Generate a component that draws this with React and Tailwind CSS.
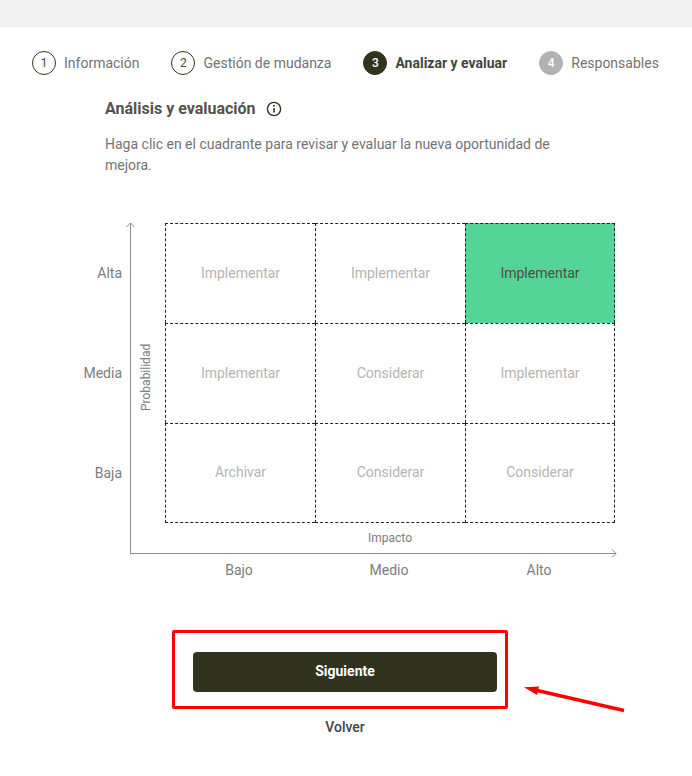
const font = { fontFamily: "Roboto, sans-serif" };

function Step({ n, label, state }) {
  const circle =
    state === "active"
      ? "bg-[#32331f] text-white font-medium border-[#32331f]"
      : state === "todo"
      ? "bg-[#b2b2b2] text-white font-medium border-[#b2b2b2]"
      : "bg-white text-[#4a4a45] border-[#32331f]";
  return (
    <div className="flex items-center gap-2">
      <div className={`w-6 h-6 rounded-full border flex items-center justify-center text-xs ${circle}`}>{n}</div>
      <span className={`text-sm ${state === "active" ? "font-bold text-[#44443f]" : "text-[#737373]"}`}>{label}</span>
    </div>
  );
}

const cells = [
  ["Implementar", "Implementar", "Implementar"],
  ["Implementar", "Considerar", "Implementar"],
  ["Archivar", "Considerar", "Considerar"],
];

export default function App() {
  return (
    <div style={font} className="relative w-[692px] h-[776px] bg-white overflow-hidden">
      <div className="h-[27px] bg-[#f2f2f2]" />

      <div className="flex items-center pl-[32px] gap-[32px] mt-6 h-6">
        <Step n="1" label="Información" state="done" />
        <Step n="2" label="Gestión de mudanza" state="done" />
        <Step n="3" label="Analizar y evaluar" state="active" />
        <Step n="4" label="Responsables" state="todo" />
      </div>

      <div className="pl-[105px] pr-[130px] mt-[24px]">
        <div className="flex items-center gap-[10px] h-5">
          <h2 className="text-base font-bold text-[#55524e]">Análisis y evaluación</h2>
          <svg width="16" height="16" viewBox="0 0 16 16" fill="none" stroke="#32331f">
            <circle cx="8" cy="8" r="6.6" strokeWidth="1.4" />
            <path d="M8 7v4.4" strokeWidth="1.6" />
            <circle cx="8" cy="4.8" r="0.95" fill="#32331f" stroke="none" />
          </svg>
        </div>
        <p className="mt-[15px] text-sm leading-[21px] text-[#737373]">
          Haga clic en el cuadrante para revisar y evaluar la nueva oportunidad de mejora.
        </p>
      </div>

      <div className="flex mt-[47px]">
        <div className="w-[122px] h-[300px] grid grid-rows-3 text-sm text-[#7d7d7d] text-right shrink-0">
          {["Alta", "Media", "Baja"].map((t) => (
            <div key={t} className="flex items-center justify-end">{t}</div>
          ))}
        </div>
        <div className="ml-[8px]">
          <div className="relative w-[486px] h-[331px] border-l border-b border-[#8a8a8a] pl-[34px]">
            <svg className="absolute -left-[5px] -top-[1px]" width="9" height="6" viewBox="0 0 9 6" fill="none" stroke="#8a8a8a">
              <path d="M0.5 5L4.5 1L8.5 5" />
            </svg>
            <svg className="absolute -right-[1px] -bottom-[5px]" width="6" height="9" viewBox="0 0 6 9" fill="none" stroke="#8a8a8a">
              <path d="M1 0.5L5 4.5L1 8.5" />
            </svg>
            <div className="grid grid-cols-[150px_150px_150px] grid-rows-[100px_100px_100px] w-[450px] h-[300px]">
              {cells.map((row, r) =>
                row.map((c, i) => {
                  const hot = r === 0 && i === 2;
                  return (
                    <div
                      key={`${r}-${i}`}
                      className={`flex items-center justify-center text-sm border-dashed border-[#222] border-l border-t ${
                        i === 2 ? "border-r" : ""
                      } ${r === 2 ? "border-b pb-[2px]" : "pb-[1px]"} ${hot ? "bg-[#54d597] text-[#4d4d48]" : "text-[#b4b4b4]"}`}
                    >
                      {c}
                    </div>
                  );
                })
              )}
            </div>
            <span className="absolute left-[8px] top-[120px] text-xs text-[#7d7d7d] [writing-mode:vertical-rl] rotate-180 leading-[14px] h-[68px]">
              Probabilidad
            </span>
            <div className="absolute left-[237px] top-[308px] text-xs leading-[14px] text-[#7d7d7d]">Impacto</div>
          </div>
          <div className="grid grid-cols-[150px_150px_150px] pl-[34px] mt-[8px] text-sm text-[#7d7d7d] leading-4 w-[486px]">
            <div className="text-center">Bajo</div>
            <div className="text-center">Medio</div>
            <div className="text-center">Alto</div>
          </div>
        </div>
      </div>

      <div className="flex flex-col items-center mt-[74px] pr-[2px]">
        <button className="w-[304px] h-10 pb-[2px] rounded bg-[#32331f] text-white text-sm font-bold">Siguiente</button>
        <div className="mt-[27px] text-sm font-medium text-[#44443f] leading-4">Volver</div>
      </div>

      <div className="absolute left-[172px] top-[630px] w-[336px] h-[79px] border-[3px] border-[#ff0000] rounded-[2px]" />
      <svg className="absolute left-[520px] top-[680px]" width="110" height="36" viewBox="0 0 110 36" fill="none">
        <path d="M104 30.5L15 10" stroke="#ff0000" strokeWidth="3.4" />
        <path d="M4 7.3L19 6.5L17 15Z" fill="#ff0000" />
      </svg>
    </div>
  );
}
